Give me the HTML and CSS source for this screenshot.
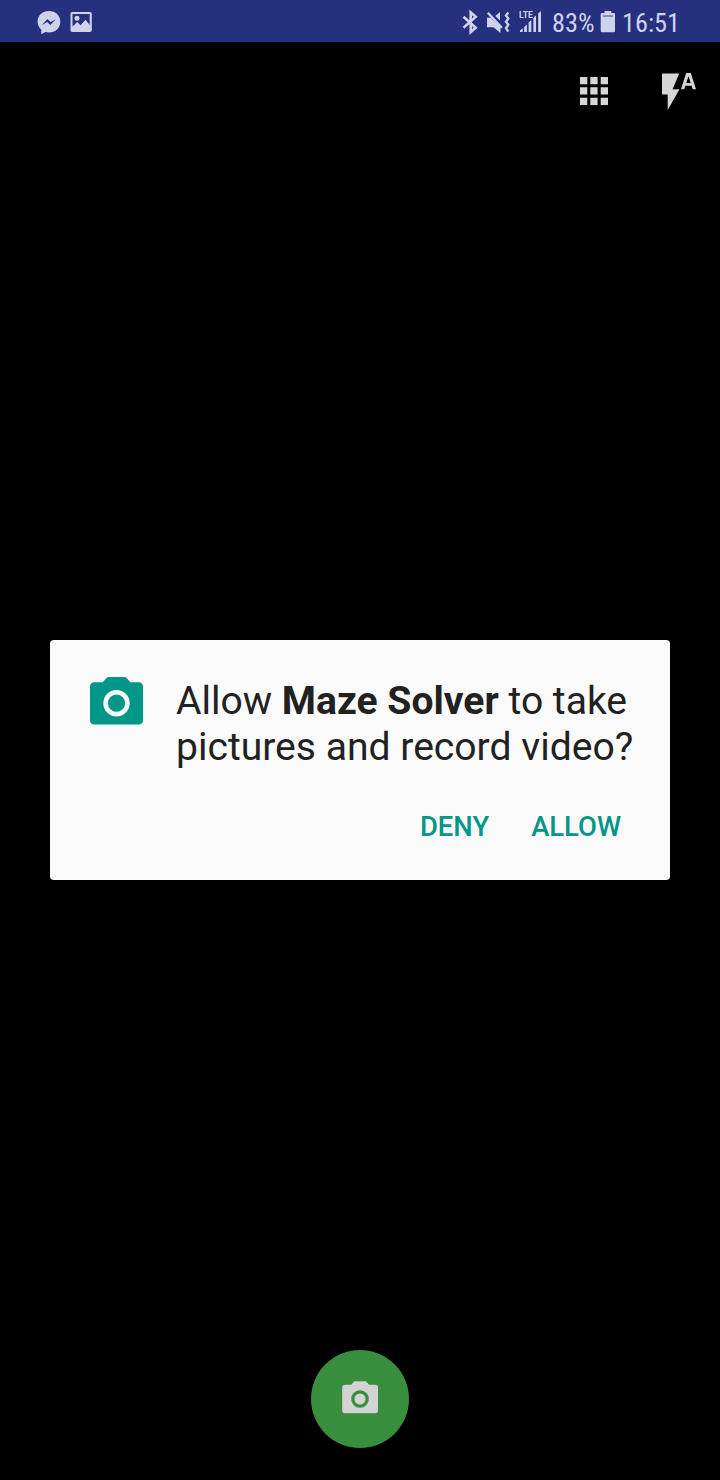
FILE: index.html
```html
<!DOCTYPE html>
<html lang="en">
<head>
<meta charset="utf-8">
<title>Maze Solver</title>
<link rel="stylesheet" href="styles.css">
</head>
<body>
<div class="screen">
  <header class="status">
    <div class="status-group">
      <svg width="28" height="42" viewBox="35 0 28 42"><path fill="currentColor" d="M49 11C42.300 11 37.600 15.600 37.600 21.600c0 3.300 1.400 6.200 3.700 8.100v4.600l4-2.300c1.100.3 2.400.5 3.700.5 6.700 0 11.300-4.700 11.300-10.800S55.700 11 49 11z"/><path fill="#25307f" d="M41.800 25.200l5.600-6.300 3.300 3.200 5.200-3.200-5.500 6.200-3.200-3.200z"/></svg>
      <svg width="24" height="42" viewBox="69 0 24 42"><path fill="currentColor" fill-rule="evenodd" d="M72 12h18q1.800 0 1.800 1.800v16.400q0 1.800-1.800 1.800H72q-1.500 0-1.500-1.800V13.800q0-1.800 1.500-1.800zM72.500 14v12.400l4.700-4.300 3.400 3.200 4.800-5.600 4.300 5.300V14z"/><circle cx="77" cy="18.300" r="2.500" fill="currentColor"/></svg>
    </div>
    <div class="status-group">
      <svg width="20" height="42" viewBox="460 0 20 42"><path fill="none" stroke="currentColor" stroke-width="2.600" d="M463.500 16.800l12.200 10.900-5 4.400V12.400l5 4.400L463.500 27.700"/></svg>
      <svg width="34" height="42" viewBox="480 0 34 42"><path fill="currentColor" d="M487 17.800h3.800L500.500 27v6L493.500 27.300H487zM495.300 16l4.700-4v8.500z"/><path fill="none" stroke="currentColor" stroke-width="2.400" d="M487.800 12.800l14 15"/><path fill="none" stroke="currentColor" stroke-width="2.300" d="M508.300 12.500l-2.300 3 2.300 3-2.300 3.300 2.300 3-2.300 3.300 2.300 3.600"/></svg>
      <svg width="34" height="42" viewBox="514 0 34 42"><g fill="currentColor"><path d="M520 32v-1.500l2.700-2.200V32zM524.200 32v-5l2.700-2.500V32zM528.600 32v-9.500l2.700-2.500v12zM533.400 32V18l2.600-2.500V32zM538.200 32V13.600l2.800-2.600v21z"/><text class="lte" x="519" y="17.500" textLength="14" lengthAdjust="spacingAndGlyphs">LTE</text></g></svg>
      <svg width="48" height="42" viewBox="548 0 48 42"><text class="condensed" x="552" y="32" textLength="42.500" lengthAdjust="spacingAndGlyphs">83%</text></svg>
      <svg width="24" height="42" viewBox="596 0 24 42"><path fill="currentColor" d="M602 13h2.600v-2h6.600v2h2.500q1.300 0 1.300 1.300v16.400q0 1.500-1.300 1.500H602q-1.300 0-1.300-1.500V14.300Q600.700 13 602 13z"/><path fill="#7880b2" d="M603 15.200h10v1.700h-10z"/></svg>
      <svg width="62" height="42" viewBox="620 0 62 42"><text class="condensed" x="622" y="32" textLength="58" lengthAdjust="spacingAndGlyphs">16:51</text></svg>
    </div>
  </header>
  <nav class="tools">
    <svg width="28" height="38" viewBox="580 72 28 38"><path fill="#d6d6d6" d="M580 77h7.300v7.300H580zM590.300 77h7.300v7.300h-7.300zM600.700 77h7.300v7.300h-7.300zM580 87.300h7.300v7.300H580zM590.300 87.300h7.300v7.300h-7.300zM600.700 87.300h7.300v7.300h-7.300zM580 97.700h7.300v7.300H580zM590.300 97.700h7.300v7.300h-7.300zM600.700 97.700h7.300v7.300h-7.300z"/></svg>
    <svg width="36" height="38" viewBox="661 72 36 38"><path fill="#d6d6d6" fill-rule="evenodd" d="M662 73.400h17.300l-6.800 15.800h7L667.700 110V94.500H662zM686.200 73h4.600l5.200 16.200h-3.300l-1.100-3.500h-6.300l-1.100 3.500H681zM688.500 76.300l-2.300 6.700h4.500z"/></svg>
  </nav>
  <main class="dialog">
    <div class="message">
      <svg class="camera" width="54" height="48" viewBox="90 677 54 48"><path fill="#009688" d="M108.600 677h16.100q1.200 0 2 .9l3.700 4.300h8q4.600 0 4.600 4.600V720q0 4.500-4.600 4.500H94.700q-4.700 0-4.700-4.500v-33.200q0-4.600 4.700-4.600h8l3.900-4.300q.8-.9 2-.9z"/><circle cx="116.500" cy="703.200" r="10.900" fill="#009688" stroke="#fafafa" stroke-width="4.600"/></svg>
      <p class="question">Allow <b>Maze Solver</b> to take<br>pictures and record video?</p>
    </div>
    <div class="actions"><button class="action">DENY</button><button class="action">ALLOW</button></div>
  </main>
  <footer class="shutter-row">
    <button class="shutter" aria-label="Take picture"><svg width="36" height="36" viewBox="342 1381 36 36"><path fill="#d3d3d3" d="M355 1381.300h10q1 0 1.700.8l2.300 2.600h6.200q3 0 3 3v22.500q0 3-3 3h-30q-3 0-3-3v-22.500q0-3 3-3h6.200l2-2.600q.7-.8 1.600-.8z"/><circle cx="360" cy="1399" r="7.200" fill="#d3d3d3" stroke="#388e3c" stroke-width="3.200"/></svg></button>
  </footer>
</div>
</body>
</html>
```
FILE: styles.css
```css
body {
  margin: 0;
  background: #000;
  font-family: Roboto, "Liberation Sans", sans-serif;
}

svg {
  display: block;
  flex: none;
}

button {
  border: 0;
  padding: 0;
  background: none;
  font-family: inherit;
}

.screen {
  display: flex;
  flex-direction: column;
  width: 720px;
  height: 1480px;
  background: #000;
}

.status {
  display: flex;
  justify-content: space-between;
  height: 42px;
  padding: 0 38px 0 35px;
  background: #25307f;
  color: #cfd3ea;
}

.status-group {
  display: flex;
}

.status-group:first-child {
  gap: 6px;
}

.condensed {
  fill: currentColor;
  font-family: "Roboto Condensed", Roboto, sans-serif;
  font-size: 26px;
}

.lte {
  font-size: 8.8px;
  font-weight: 700;
}

.tools {
  display: flex;
  justify-content: flex-end;
  gap: 53px;
  padding: 30px 23px 0 0;
}

.dialog {
  box-sizing: border-box;
  width: 620px;
  height: 240px;
  margin: 530px auto 0;
  padding: 37px 29px 0 40px;
  border-radius: 4px;
  background: #fafafa;
}

.message {
  display: flex;
  gap: 32px;
}

.question {
  margin: 0;
  padding-top: 1px;
  color: #212121;
  font-size: 39.1px;
  line-height: 46px;
  white-space: nowrap;
}

.actions {
  display: flex;
  justify-content: flex-end;
  gap: 42px;
  padding: 41px 20px 0 0;
}

.action {
  color: #009688;
  font-size: 27.4px;
  font-weight: 500;
  line-height: 32px;
}

.shutter-row {
  display: flex;
  justify-content: center;
  margin-top: auto;
  padding-bottom: 32px;
}

.shutter {
  display: flex;
  align-items: center;
  justify-content: center;
  width: 98px;
  height: 98px;
  border-radius: 50%;
  background: #388e3c;
}
```
